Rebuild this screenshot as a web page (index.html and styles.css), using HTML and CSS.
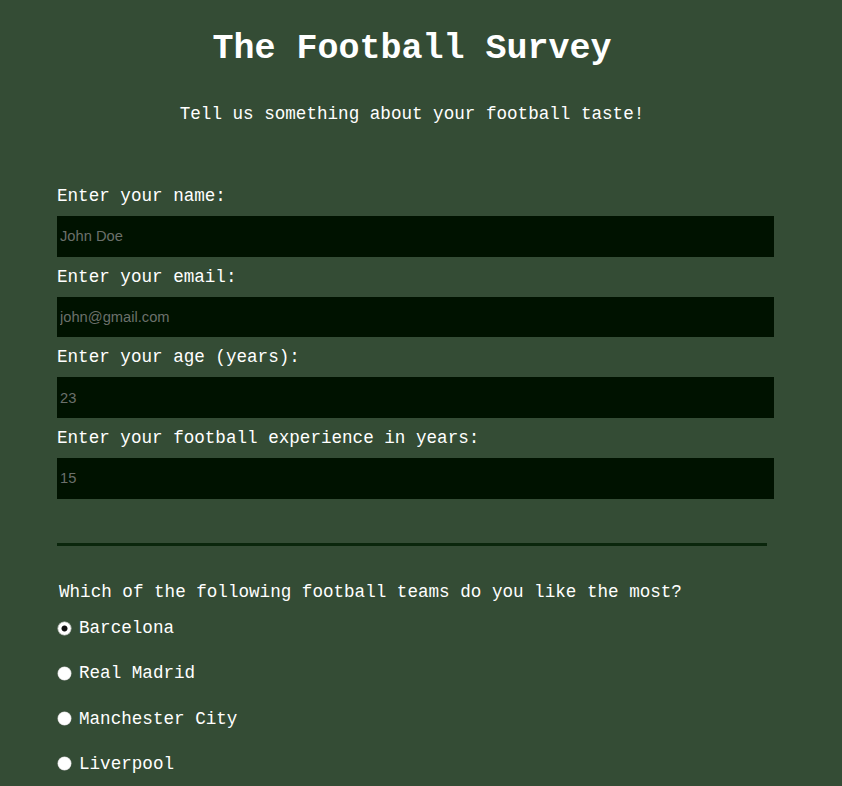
FILE: index.html
```html
<!DOCTYPE html>
<html lang="en">
<head>
<meta charset="utf-8">
<title>The Football Survey</title>
<link rel="stylesheet" href="styles.css">
</head>
<body>
<main class="page">
  <header class="header">
    <h1 class="title">The Football Survey</h1>
    <p class="subtitle">Tell us something about your football taste!</p>
  </header>
  <form class="survey">
    <label class="field-label" for="name">Enter your name:</label>
    <input class="field" id="name" type="text" placeholder="John Doe">
    <label class="field-label" for="email">Enter your email:</label>
    <input class="field" id="email" type="email" placeholder="john@gmail.com">
    <label class="field-label" for="age">Enter your age (years):</label>
    <input class="field" id="age" type="number" placeholder="23">
    <label class="field-label" for="exp">Enter your football experience in years:</label>
    <input class="field" id="exp" type="number" placeholder="15">
    <hr class="divider">
    <p class="question">Which of the following football teams do you like the most?</p>
    <label class="option"><input class="radio" type="radio" name="team" checked><span>Barcelona</span></label>
    <label class="option"><input class="radio" type="radio" name="team"><span>Real Madrid</span></label>
    <label class="option"><input class="radio" type="radio" name="team"><span>Manchester City</span></label>
    <label class="option"><input class="radio" type="radio" name="team"><span>Liverpool</span></label>
  </form>
</main>
</body>
</html>
```
FILE: styles.css
```css
html, body {
  margin: 0;
  padding: 0;
  background: #344c35;
}
body {
  font-family: "Liberation Mono", "Courier New", monospace;
  color: #ffffff;
}
.page {
  width: 824px;
}
.header {
  text-align: center;
  padding-top: 29px;
}
.title {
  margin: 0;
  font-size: 35px;
  line-height: 40px;
  font-weight: bold;
}
.subtitle {
  margin: 35px 0 0;
  font-size: 17.6px;
  line-height: 20px;
}
.survey {
  display: flex;
  flex-direction: column;
  align-items: flex-start;
  padding: 52px 0 40px 57px;
}
.field-label {
  display: block;
  font-size: 17.6px;
  line-height: 20px;
  padding: 10px 0;
}
.field {
  box-sizing: border-box;
  width: 717px;
  height: 40.7px;
  margin: 0;
  border: none;
  outline: none;
  background: #001200;
  color: #cccccc;
  padding: 0 3px;
  font-family: "Liberation Sans", Arial, sans-serif;
  font-size: 14.7px;
}
.field::placeholder {
  color: #6b706b;
}
.field::-webkit-outer-spin-button,
.field::-webkit-inner-spin-button {
  -webkit-appearance: none;
  margin: 0;
}
.divider {
  box-sizing: border-box;
  width: 710px;
  height: 3px;
  margin: 44px 0 0;
  border: none;
  background: #0a260c;
}
.question {
  margin: 36px 0 0 2px;
  font-size: 17.6px;
  line-height: 20px;
}
.option {
  display: flex;
  align-items: center;
  gap: 8px;
  font-size: 17.6px;
  line-height: 20px;
  margin-top: 7.3px;
  height: 38px;
}
.option:first-of-type {
  margin-top: 0;
}
.radio {
  -webkit-appearance: none;
  appearance: none;
  width: 13px;
  height: 13px;
  margin: 0 0 0 1px;
  border-radius: 50%;
  background: #ffffff;
  box-shadow: 0 0 0 0.5px #c8c8c8;
}
.radio:checked {
  background: radial-gradient(circle, #101010 0 2.6px, #ffffff 3.4px);
}
```
